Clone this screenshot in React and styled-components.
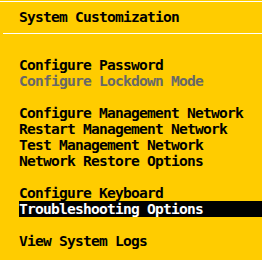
import React from "react";
import styled, { createGlobalStyle } from "styled-components";

const Global = createGlobalStyle`
  html, body {
    margin: 0;
    padding: 0;
    background: #ffcc00;
  }
`;

const Screen = styled.div`
  width: 262px;
  height: 260px;
  background: #ffcc00;
  padding-top: 1px;
  box-sizing: border-box;
  overflow: hidden;
  font-family: "DejaVu Sans Mono", "Liberation Mono", monospace;
  font-size: 14.6px;
  letter-spacing: -0.79px;
  font-weight: bold;
  color: #000;
`;

const Rule = styled.div`
  height: 1px;
  background: #ffffff;
  margin-left: ${(p) => p.$inset || 0}px;
  margin-top: ${(p) => p.$top || 0}px;
`;

const Title = styled.div`
  margin-top: 7px;
  height: 16px;
  line-height: 16px;
  padding-left: 19px;
  white-space: pre;
`;

const Menu = styled.div`
  margin-top: 23px;
  display: flex;
  flex-direction: column;
`;

const Item = styled.div`
  height: 16px;
  line-height: 16px;
  margin-left: 19px;
  white-space: pre;
  color: ${(p) => (p.$selected ? "#ffffff" : p.$disabled ? "#686868" : "#000000")};
  background: ${(p) => (p.$selected ? "#000000" : "transparent")};
`;

const Spacer = styled.div`
  height: 16px;
`;

const groups = [
  [
    { label: "Configure Password" },
    { label: "Configure Lockdown Mode", disabled: true },
  ],
  [
    { label: "Configure Management Network" },
    { label: "Restart Management Network" },
    { label: "Test Management Network" },
    { label: "Network Restore Options" },
  ],
  [
    { label: "Configure Keyboard" },
    { label: "Troubleshooting Options", selected: true },
  ],
  [{ label: "View System Logs" }],
];

export default function App() {
  return (
    <>
      <Global />
      <Screen>
        <Rule />
        <Title>System Customization</Title>
        <Rule $inset={3} $top={8} />
        <Menu>
          {groups.map((g, gi) => (
            <React.Fragment key={gi}>
              {gi > 0 && <Spacer />}
              {g.map((it) => (
                <Item key={it.label} $selected={it.selected} $disabled={it.disabled}>
                  {it.label}
                </Item>
              ))}
            </React.Fragment>
          ))}
        </Menu>
      </Screen>
    </>
  );
}
